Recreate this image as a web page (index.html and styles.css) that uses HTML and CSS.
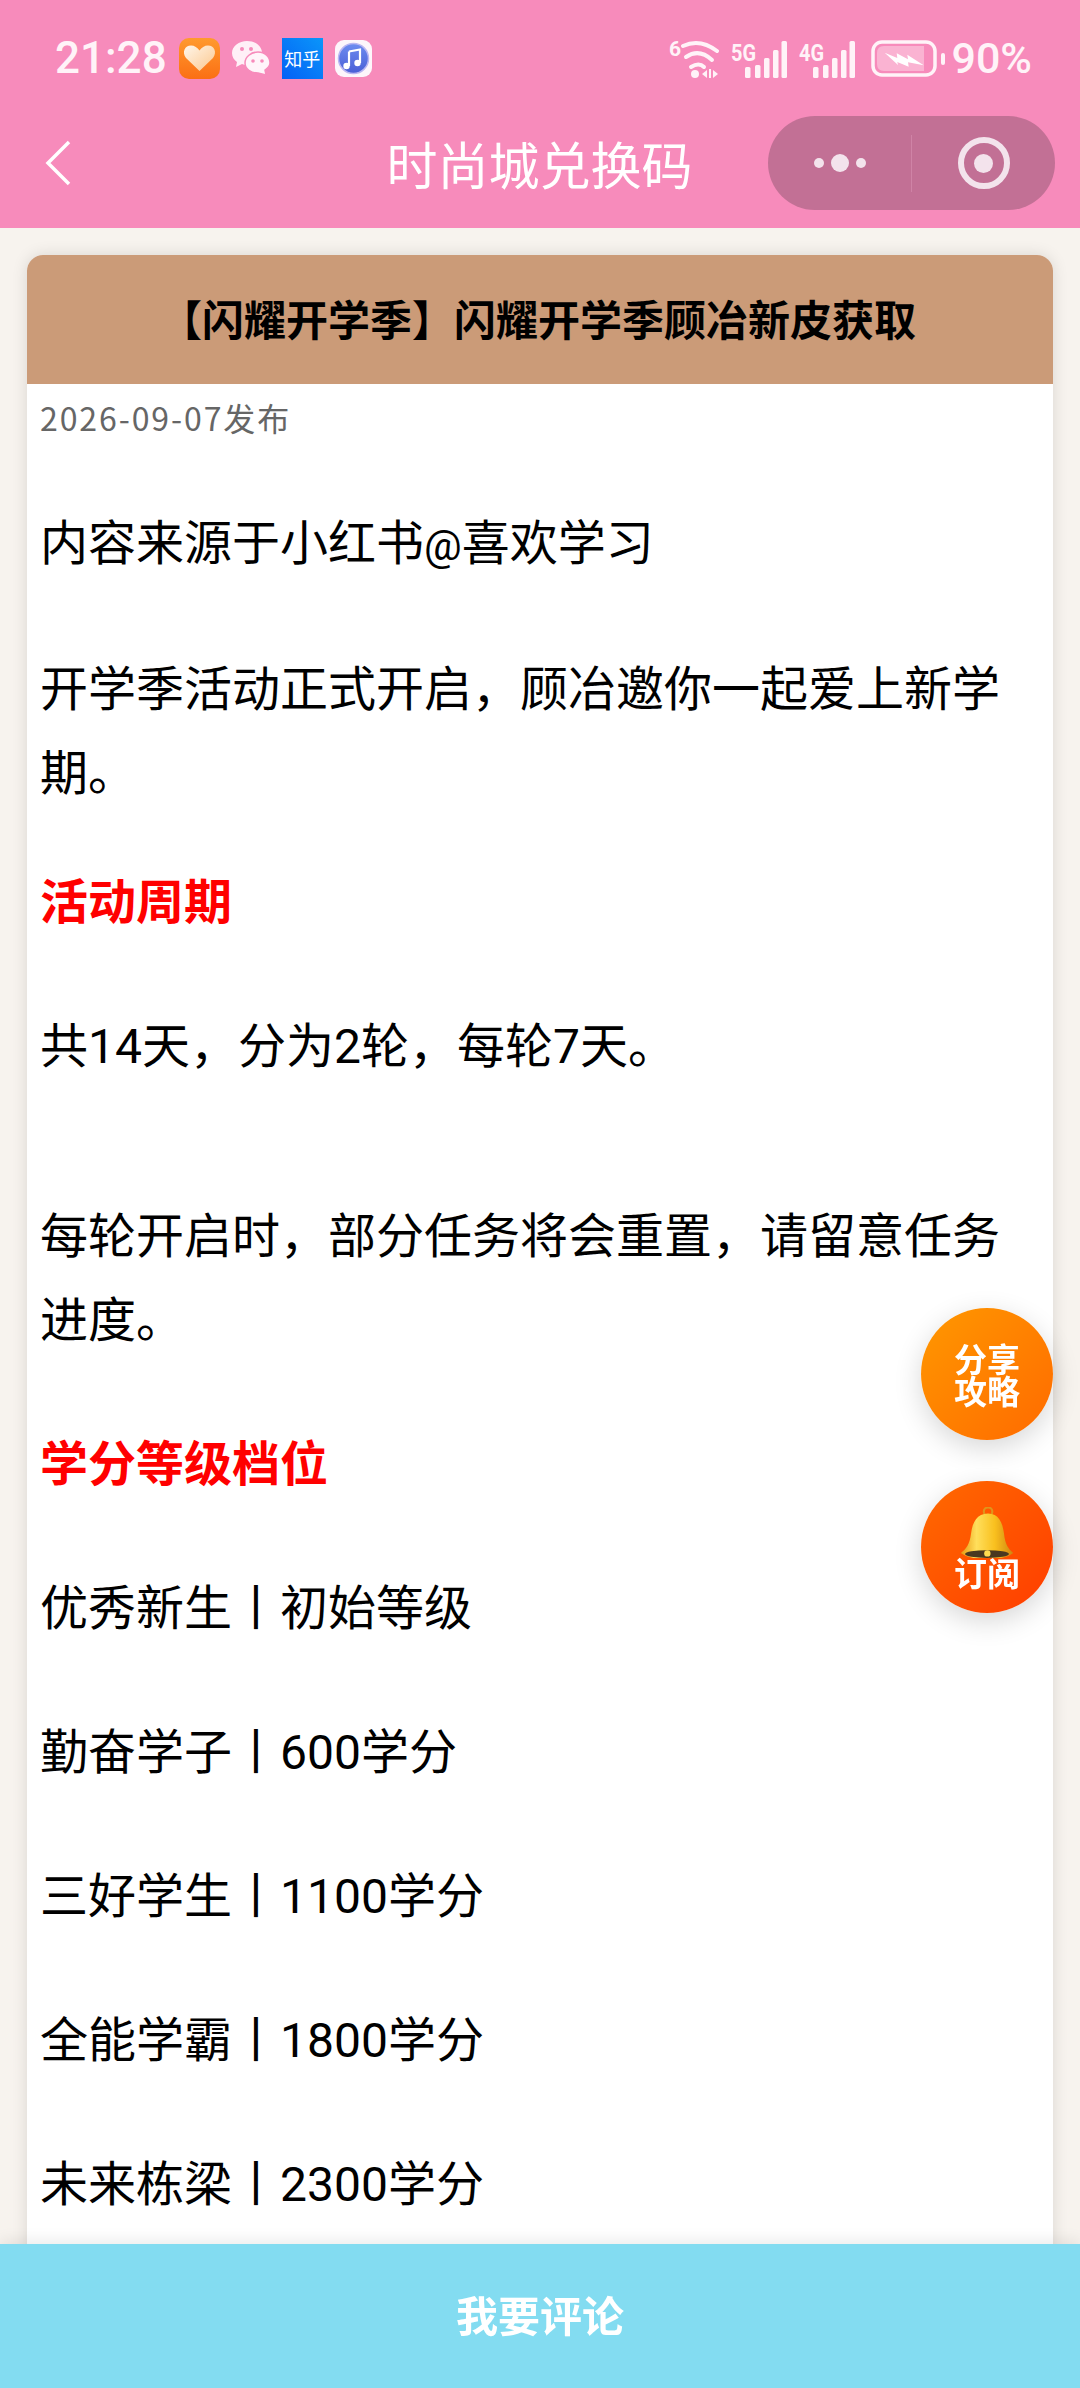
FILE: index.html
```html
<!DOCTYPE html>
<html lang="zh-CN">
<head>
    <meta charset="UTF-8">
    <meta name="viewport" content="width=device-width, initial-scale=1.0">
    <title>时尚城兑换码</title>
    <link rel="stylesheet" href="styles.css">
</head>
<body>
    <header class="topbar">
        <div class="status-row">
            <div class="status-left">
                <span class="status-text time">21:28</span>
                <svg class="app-icon" width="41" height="41" viewBox="0 0 41 41">
                    <defs>
                        <linearGradient id="heartBg" x1="0" y1="0" x2="0" y2="1">
                            <stop offset="0" stop-color="#ff9a2e"/>
                            <stop offset="1" stop-color="#fb6f14"/>
                        </linearGradient>
                        <linearGradient id="heartFill" x1="0" y1="0" x2="1" y2="1">
                            <stop offset="0" stop-color="#fff6ea"/>
                            <stop offset="1" stop-color="#fbc78d"/>
                        </linearGradient>
                    </defs>
                    <rect width="41" height="41" rx="10" fill="url(#heartBg)"/>
                    <path d="M20.5 33 L7 20 C2.500 14 6 7.500 12 7.500 C15.500 7.500 18.500 9.500 20.500 12.500 C22.500 9.500 25.500 7.500 29 7.500 C35 7.500 38.500 14 34 20 Z" fill="url(#heartFill)"/>
                </svg>
                <svg class="app-icon" width="38" height="34" viewBox="0 0 38 34">
                    <path d="M15 0 C7 0 0 5 0 12 C0 16 2 19 5 21 L4 26 L10 23 C12 24 14 24 15 24 C24 24 30 18 30 12 C30 5 23 0 15 0 Z" fill="#fff0f7"/>
                    <path d="M26 11 C19 11 13 16 13 22 C13 28 19 32 26 32 L34 34 L33 29 C36 27 38 25 38 22 C38 16 33 11 26 11 Z" fill="#fff5fa" stroke="#f78bbb" stroke-width="1.500"/>
                    <circle cx="10" cy="8" r="2" fill="#f78bbb"/>
                    <circle cx="19" cy="8" r="2" fill="#f78bbb"/>
                    <circle cx="21" cy="20" r="1.800" fill="#f78bbb"/>
                    <circle cx="30" cy="20" r="1.800" fill="#f78bbb"/>
                </svg>
                <div class="zhihu-icon">知乎</div>
                <svg class="app-icon" width="37" height="37" viewBox="0 0 37 37">
                    <defs>
                        <linearGradient id="musicFill" x1="0" y1="0" x2="0" y2="1">
                            <stop offset="0" stop-color="#6d8cf0"/>
                            <stop offset="1" stop-color="#4a5fd6"/>
                        </linearGradient>
                    </defs>
                    <rect width="37" height="37" rx="9" fill="#fdf6fb"/>
                    <circle cx="18.500" cy="18.500" r="15" fill="url(#musicFill)" stroke="#b9b6f2" stroke-width="1.500"/>
                    <path d="M14 11.500 L25 9.500 V23" fill="none" stroke="#fff" stroke-width="2.200"/>
                    <path d="M14 11.500 V26" fill="none" stroke="#fff" stroke-width="2.200"/>
                    <circle cx="11.500" cy="26" r="3.200" fill="#fff"/>
                    <circle cx="22.500" cy="23" r="3.200" fill="#fff"/>
                </svg>
            </div>
            <div class="status-right">
                <svg width="51" height="40" viewBox="0 0 51 40">
                    <text class="svg-label" x="1" y="18" font-size="21">6</text>
                    <g fill="none" stroke="#fff3f8" stroke-width="4" stroke-linecap="round">
                        <path d="M15 8 Q32 0 49 13"/>
                        <path d="M18 19 Q31 10 44 22"/>
                        <path d="M23 29 Q31 24 36 29"/>
                    </g>
                    <circle cx="27" cy="36" r="4" fill="#fff3f8"/>
                    <path d="M34 36 L39 32 V40 Z M45 32 L50 36 L45 40 Z" fill="#fff3f8"/>
                    <rect x="41" y="31" width="2" height="9" fill="#fff3f8"/>
                </svg>
                <svg width="56" height="40" viewBox="0 0 56 40">
                    <text class="svg-label" x="0" y="23" font-size="23" textLength="25" lengthAdjust="spacingAndGlyphs">5G</text>
                    <g fill="#fff3f8">
                        <rect x="14" y="29" width="5.500" height="11" rx="1.500"/>
                        <rect x="24" y="27" width="5.500" height="13" rx="1.500"/>
                        <rect x="33" y="20" width="5.500" height="20" rx="1.500"/>
                        <rect x="42" y="12" width="5.500" height="28" rx="1.500"/>
                        <rect x="50.500" y="3" width="5.500" height="37" rx="1.500"/>
                    </g>
                </svg>
                <svg width="56" height="40" viewBox="0 0 56 40">
                    <text class="svg-label" x="0" y="23" font-size="23" textLength="25" lengthAdjust="spacingAndGlyphs">4G</text>
                    <g fill="#fff3f8">
                        <rect x="14" y="29" width="5.500" height="11" rx="1.500"/>
                        <rect x="24" y="27" width="5.500" height="13" rx="1.500"/>
                        <rect x="33" y="20" width="5.500" height="20" rx="1.500"/>
                        <rect x="42" y="12" width="5.500" height="28" rx="1.500"/>
                        <rect x="50.500" y="3" width="5.500" height="37" rx="1.500"/>
                    </g>
                </svg>
                <svg class="battery" width="74" height="40" viewBox="0 0 74 40">
                    <rect x="2" y="4" width="62" height="33" rx="9" fill="none" stroke="#fff3f8" stroke-width="3.500"/>
                    <path d="M6 15 Q6 8 13 8 H53 V33 H13 Q6 33 6 26 Z" fill="#fff" opacity="0.35"/>
                    <path d="M13.700 14.700 L26.300 20 L25.700 15.300 L37 21.300 L36.300 16.700 L52.700 27.300 L37 24.300 L37.700 28.700 L26.300 24 L27 27 Z" fill="#fff"/>
                    <rect x="70" y="15" width="4" height="12" rx="2" fill="#fff3f8"/>
                </svg>
                <span class="status-text">90%</span>
            </div>
        </div>
        <nav class="nav-row">
            <svg class="back-icon" width="28" height="48" viewBox="0 0 28 48">
                <path d="M25 3 L4 24 L25 45" fill="none" stroke="#fff" stroke-width="3.500"/>
            </svg>
            <div class="nav-title">时尚城兑换码</div>
            <div class="capsule">
                <div class="capsule-dots">
                    <i class="dot"></i><i class="dot dot-big"></i><i class="dot"></i>
                </div>
                <div class="capsule-line"></div>
                <div class="capsule-close"><i></i></div>
            </div>
        </nav>
    </header>

    <main class="card">
        <h1 class="card-title">【闪耀开学季】闪耀开学季顾冶新皮获取</h1>
        <div class="card-date">2026-09-07发布</div>
        <div class="card-body">
            <p>内容来源于小红书<span class="at">@</span>喜欢学习</p>
            <p>开学季活动正式开启，顾冶邀你一起爱上新学期。</p>
            <p class="red-head tight">活动周期</p>
            <p class="spaced">共14天，分为2轮，每轮7天。</p>
            <p>每轮开启时，部分任务将会重置，请留意任务进度。</p>
            <p class="red-head">学分等级档位</p>
            <p>优秀新生丨初始等级</p>
            <p>勤奋学子丨600学分</p>
            <p>三好学生丨1100学分</p>
            <p>全能学霸丨1800学分</p>
            <p>未来栋梁丨2300学分</p>
        </div>
    </main>

    <div class="float-btns">
        <div class="float-btn share">分享<br>攻略</div>
        <div class="float-btn subscribe">
            <svg width="54" height="51" viewBox="66 30 152 144">
                <defs>
                    <linearGradient id="bellFill" x1="0" y1="0" x2="1" y2="0">
                        <stop offset="0" stop-color="#e89a12"/>
                        <stop offset="0.300" stop-color="#ffdf5c"/>
                        <stop offset="0.650" stop-color="#f9c01e"/>
                        <stop offset="1" stop-color="#cf8410"/>
                    </linearGradient>
                </defs>
                <circle cx="145" cy="43" r="12" fill="none" stroke="#e0951a" stroke-width="6"/>
                <path d="M145 48 C114 48 101 72 97 105 C93 135 84 148 68 160 C100 184 188 184 216 160 C202 148 193 135 190 105 C186 72 174 48 145 48 Z" fill="url(#bellFill)"/>
                <ellipse cx="142" cy="163" rx="62" ry="11" fill="#4a3820"/>
                <circle cx="143" cy="161" r="9" fill="#ffdc50"/>
            </svg>
            <span class="bell-label">订阅</span>
        </div>
    </div>

    <div class="comment-bar">我要评论</div>
</body>
</html>
```

FILE: styles.css
```css
html, body {
    height: 100%;
    overflow: hidden;
}
body {
    margin: 0;
    background-color: #f7f3ee;
    font-family: "Noto Sans CJK SC", "Noto Sans", sans-serif;
    color: #000;
}

/* top pink area */
.topbar {
    background-color: #f78bbb;
    height: 228px;
    box-sizing: border-box;
}
.status-row {
    height: 116px;
    display: flex;
    justify-content: space-between;
    align-items: center;
    padding: 0 48px 0 55px;
}
.status-left, .status-right {
    display: flex;
    align-items: center;
    gap: 12px;
}
.status-text {
    font-family: Roboto, sans-serif;
    font-size: 43px;
    font-weight: 500;
    color: #fff3f8;
}
.time {
    font-size: 44px;
}
.svg-label {
    font-family: Roboto, sans-serif;
    font-weight: 700;
    fill: #fff3f8;
}
.battery {
    margin-left: 4px;
    margin-right: -6px;
}
.zhihu-icon {
    width: 41px;
    height: 41px;
    background: linear-gradient(45deg, #0560f5, #0a96fa);
    color: #fff;
    font-size: 18px;
    line-height: 41px;
    text-align: center;
    white-space: nowrap;
}
.nav-row {
    height: 94px;
    display: grid;
    grid-template-columns: 1fr auto 1fr;
    align-items: center;
    padding: 0 25px 0 44px;
}
.nav-title {
    font-size: 51px;
    font-weight: 400;
    color: #fff;
    padding-right: 20px;
    white-space: nowrap;
}
.capsule {
    justify-self: end;
    width: 287px;
    height: 94px;
    border-radius: 47px;
    background-color: #c27095;
    display: flex;
    align-items: center;
}
.capsule-dots {
    flex: 1;
    display: flex;
    justify-content: center;
    align-items: center;
    gap: 7px;
}
.dot {
    width: 10px;
    height: 10px;
    border-radius: 50%;
    background-color: #f3e3ec;
}
.dot-big {
    width: 18px;
    height: 18px;
}
.capsule-line {
    width: 1px;
    height: 57px;
    background-color: #cf83a6;
}
.capsule-close {
    flex: 1;
    display: flex;
    justify-content: center;
}
.capsule-close i {
    width: 52px;
    height: 52px;
    box-sizing: border-box;
    border: 6px solid #f3e3ec;
    border-radius: 50%;
    display: flex;
    align-items: center;
    justify-content: center;
}
.capsule-close i::after {
    content: "";
    width: 19px;
    height: 19px;
    border-radius: 50%;
    background-color: #f3e3ec;
}

/* article card */
.card {
    margin: 27px 27px 0;
    background-color: #fff;
    border-radius: 16px 16px 0 0;
    box-shadow: 0 0 16px rgba(0, 0, 0, 0.12);
    padding-bottom: 300px;
}
.card-title {
    margin: 0;
    height: 129px;
    padding-right: 4px;
    background-color: #cb9b78;
    border-radius: 16px 16px 0 0;
    font-size: 42px;
    font-weight: 700;
    line-height: 125px;
    text-align: center;
    white-space: nowrap;
}
.card-date {
    padding-left: 13px;
    font-size: 32px;
    letter-spacing: 1.900px;
    line-height: 66px;
    color: #666;
}
.card-body {
    padding: 52px 13px 0;
}
.card-body p {
    margin: 0 0 60px;
    font-family: Roboto, "Noto Sans CJK SC", sans-serif;
    font-size: 48px;
    line-height: 84px;
}
.card-body .at {
    font-size: 42px;
}
.card-body .red-head {
    color: #f00;
    font-weight: 700;
}
.card-body .tight {
    margin-top: -15px;
}
.card-body .spaced {
    margin-bottom: 106px;
}

/* floating round buttons */
.float-btns {
    position: fixed;
    right: 27px;
    top: 1308px;
    display: flex;
    flex-direction: column;
    gap: 41px;
}
.float-btn {
    width: 132px;
    height: 132px;
    border-radius: 50%;
    box-shadow: 0 8px 28px rgba(0, 0, 0, 0.16);
    color: #fff;
    font-size: 33px;
    font-weight: 700;
    line-height: 32px;
    text-align: center;
    display: flex;
    flex-direction: column;
    align-items: center;
    justify-content: center;
}
.share {
    background: linear-gradient(135deg, #ff9800, #ff6a00);
}
.subscribe {
    background: linear-gradient(135deg, #ff6a00, #ff3d00);
}
.bell-label {
    margin-top: -2px;
}

/* bottom bar */
.comment-bar {
    position: fixed;
    left: 0;
    right: 0;
    bottom: 0;
    height: 144px;
    background-color: #83dcf1;
    box-shadow: 0 -4px 14px rgba(0, 0, 0, 0.08);
    color: #fff;
    font-size: 42px;
    font-weight: 700;
    line-height: 140px;
    text-align: center;
}
```
